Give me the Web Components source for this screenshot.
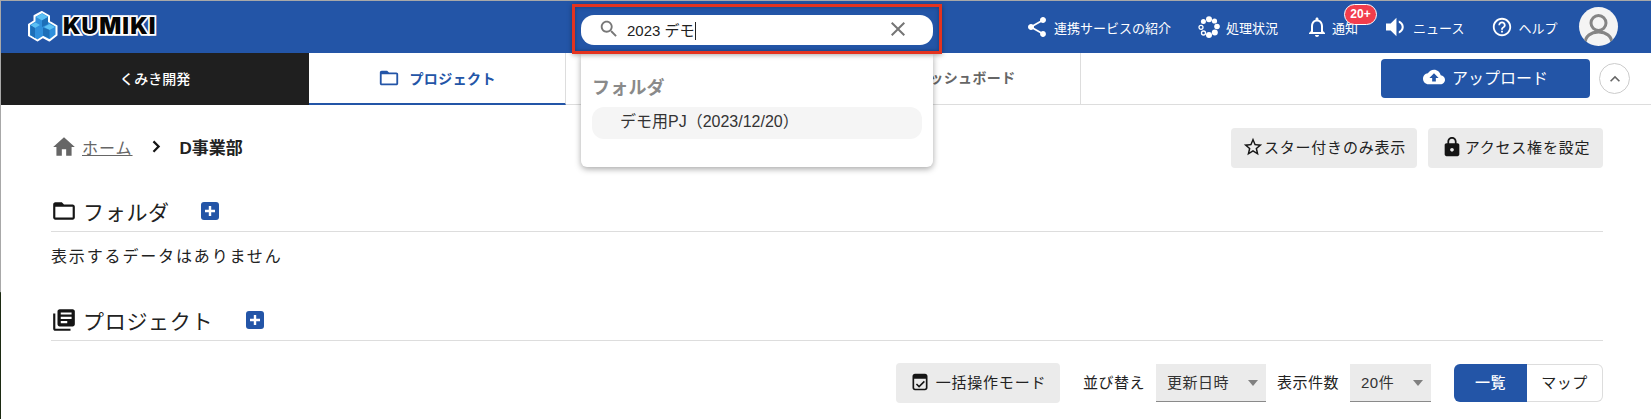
<!DOCTYPE html>
<html lang="ja">
<head>
<meta charset="utf-8">
<title>KUMIKI</title>
<style>
    html, body {
        margin: 0;
        height: 419px;
        overflow: hidden;
        background: #fff;
        font-family: "Liberation Sans", "Noto Sans CJK JP", sans-serif;
        color: #222;
    }
    #page {
        height: 418px;
        border-top: 1px solid #b5b5b5;
        border-left: 1px solid;
        border-image: linear-gradient(to bottom, #a8a8a8 0, #a8a8a8 291px, #1c2a12 292px, #1c2a12 100%) 1;
        overflow: hidden;
    }
</style>
</head>
<body>
<div id="page">
    <app-header></app-header>
    <app-tabs></app-tabs>
    <main-view></main-view>
</div>

<script>
const BLUE = "#2355a7";

const ICONS = {
    share: "M18 16.08c-.76 0-1.44.3-1.96.77L8.91 12.7c.05-.23.09-.46.09-.7s-.04-.47-.09-.7l7.05-4.11c.54.5 1.25.81 2.04.81 1.66 0 3-1.34 3-3s-1.34-3-3-3-3 1.34-3 3c0 .24.04.47.09.7L8.04 9.81C7.5 9.31 6.79 9 6 9c-1.66 0-3 1.34-3 3s1.34 3 3 3c.79 0 1.5-.31 2.04-.81l7.12 4.16c-.05.21-.08.43-.08.65 0 1.61 1.31 2.92 2.92 2.92 1.61 0 2.92-1.31 2.92-2.92s-1.31-2.92-2.92-2.92z",
    search: "M15.5 14h-.79l-.28-.27C15.41 12.59 16 11.11 16 9.5 16 5.91 13.09 3 9.5 3S3 5.91 3 9.5 5.91 16 9.5 16c1.61 0 3.09-.59 4.23-1.57l.27.28v.79l5 4.99L20.49 19l-4.99-5zm-6 0C7.01 14 5 11.99 5 9.5S7.01 5 9.5 5 14 7.01 14 9.5 11.99 14 9.5 14z",
    close: "M19 6.41 17.59 5 12 10.59 6.41 5 5 6.41 10.59 12 5 17.59 6.41 19 12 13.41 17.59 19 19 17.59 13.41 12z",
    bell: "M12 22c1.1 0 2-.9 2-2h-4c0 1.1.9 2 2 2zm6-6v-5c0-3.07-1.63-5.64-4.5-6.32V4c0-.83-.67-1.5-1.5-1.5s-1.5.67-1.5 1.5v.68C7.64 5.36 6 7.92 6 11v5l-2 2v1h16v-1l-2-2zm-2 1H8v-6c0-2.48 1.51-4.5 4-4.5s4 2.02 4 4.5v6z",
    volume: "M3 9v6h4l5 5V4L7 9H3zm11-2.500v1.800c1.500.7 2.500 2.100 2.500 3.700s-1 3-2.500 3.700v1.800c2.500-.8 4.300-2.900 4.300-5.500S16.500 7.300 14 6.500z",
    help: "M11 18h2v-2h-2v2zm1-16C6.48 2 2 6.48 2 12s4.48 10 10 10 10-4.48 10-10S17.52 2 12 2zm0 18c-4.41 0-8-3.59-8-8s3.59-8 8-8 8 3.59 8 8-3.59 8-8 8zm0-14c-2.21 0-4 1.79-4 4h2c0-1.1.9-2 2-2s2 .9 2 2c0 2-3 1.75-3 5h2c0-2.25 3-2.5 3-5 0-2.21-1.79-4-4-4z",
    folder: "M20 6h-8l-2-2H4c-1.1 0-1.99.9-1.99 2L2 18c0 1.1.9 2 2 2h16c1.1 0 2-.9 2-2V8c0-1.1-.9-2-2-2zm0 12H4V8h16v10z",
    home: "M10 20v-6h4v6h5v-8h3L12 3 2 12h3v8z",
    chevron: "M7.500 5 10 2.500 19.500 12 10 21.500 7.500 19l7-7z",
    less: "M12 8l-6 6 1.41 1.41L12 10.83l4.59 4.58L18 14z",
    upload: "M19.35 10.04C18.67 6.59 15.64 4 12 4 9.11 4 6.6 5.64 5.35 8.04 2.34 8.36 0 10.91 0 14c0 3.31 2.69 6 6 6h13c2.76 0 5-2.24 5-5 0-2.64-2.05-4.78-4.65-4.96zM14 13v4h-4v-4H7l5-5 5 5h-3z",
    star: "M22 9.24l-7.19-.62L12 2 9.19 8.63 2 9.24l5.46 4.73L5.82 21 12 17.27 18.18 21l-1.63-7.03L22 9.24zM12 15.4l-3.76 2.27 1-4.28-3.32-2.88 4.38-.38L12 6.1l1.71 4.04 4.38.38-3.32 2.88 1 4.28L12 15.4z",
    lock: "M18 8h-1V6c0-2.76-2.24-5-5-5S7 3.24 7 6v2H6c-1.1 0-2 .9-2 2v10c0 1.1.9 2 2 2h12c1.1 0 2-.9 2-2V10c0-1.1-.9-2-2-2zm-6 9c-1.1 0-2-.9-2-2s.9-2 2-2 2 .9 2 2-.9 2-2 2zm3.1-9H8.9V6c0-1.71 1.39-3.1 3.1-3.1 1.71 0 3.1 1.39 3.1 3.1v2z",
    books: "M4 6H2v14c0 1.1.9 2 2 2h14v-2H4V6zm16-4H8c-1.1 0-2 .9-2 2v12c0 1.1.9 2 2 2h12c1.1 0 2-.9 2-2V4c0-1.1-.9-2-2-2zm-1 9H9V9h10v2zm-4 4H9v-2h6v2zm4-8H9V5h10v2z",
    bulk: "M6 2h12c1.7 0 3 1.3 3 3v14c0 1.7-1.3 3-3 3H6c-1.7 0-3-1.3-3-3V5c0-1.7 1.3-3 3-3zm-1 6v11c0 .6.4 1 1 1h12c.6 0 1-.4 1-1V8H5zm11.6 2.6 1.3 1.3-7 7-3.8-3.8 1.3-1.3 2.5 2.5z",
};

// svg icon
class UiIcon extends HTMLElement {
    connectedCallback() {
        const size = this.getAttribute("size") || 24;
        const color = this.getAttribute("color") || "currentColor";
        const d = ICONS[this.getAttribute("name")];
        this.attachShadow({ mode: "open" }).innerHTML = `
            <style>
                :host { display: inline-flex; flex: none; }
                svg { display: block; }
            </style>
            <svg width="${size}" height="${size}" viewBox="0 0 24 24"><path fill="${color}" d="${d}"/></svg>
        `;
    }
}

// logo
class AppLogo extends HTMLElement {
    constructor() {
        super();
        this.attachShadow({ mode: "open" }).innerHTML = `
            <style>
                :host { display: flex; align-items: center; gap: 5px; }
                span {
                    font: 900 23px/1 Inter, "Liberation Sans", sans-serif;
                    letter-spacing: 1.1px;
                    color: #050505;
                    -webkit-text-stroke: 3.5px #fff;
                    paint-order: stroke fill;
                    margin-top: 1px;
                }
                svg { display: block; }
            </style>
            <svg width="31" height="31" viewBox="0 0 31 31">
                <path d="M15 1 22 5 22 10.5 29.5 15 29.5 24 22.5 29.5 16 26 10.5 29.5 2 24.5 2 13.5 7.5 10 7.5 5z" fill="#2f8fdc" stroke="#fff" stroke-width="2" stroke-linejoin="round"/>
                <path d="M15 2.5 21 6 15 9.5 9 6z M8.500 11.500 13 14 8 17 3.500 14.300z M22.500 13 28 16 22.500 19 17 16z" fill="#5cc0f4"/>
                <path d="M15 9.500 21 6V13L15 16z M3.500 14.300 8 17V27L3.500 24z M16 16.500 22.500 19V27.500L16 24.500z" fill="#1d6fb8"/>
            </svg>
            <span>KUMIKI</span>
        `;
    }
}

// ヘッダーの検索ボックス
class SearchBox extends HTMLElement {
    constructor() {
        super();
        this.attachShadow({ mode: "open" }).innerHTML = `
            <style>
                :host { display: block; position: relative; width: 352px; height: 30px; }
                .field {
                    display: flex;
                    align-items: center;
                    height: 100%;
                    box-sizing: border-box;
                    padding: 0 23px 2px 17px;
                    background: #fff;
                    border-radius: 13px;
                    font-size: 15px;
                    color: #222;
                }
                .value { margin-left: 7px; flex: 1; }
                .caret { display: inline-block; width: 1px; height: 18px; background: #222; vertical-align: -4px; }
                .mark {
                    position: absolute;
                    left: -9px; right: -9px; top: -11px; bottom: -9px;
                    border: 3px solid #e4331f;
                    box-shadow: 0 1px 5px rgba(0, 0, 0, .35), inset 0 0 4px rgba(0, 0, 0, .3);
                    pointer-events: none;
                }
                .drop {
                    position: absolute;
                    left: 0; right: 0; top: 39px;
                    height: 113px;
                    box-sizing: border-box;
                    padding: 21px 11px 0;
                    background: #fff;
                    border-radius: 0 0 6px 6px;
                    box-shadow: 0 2px 6px rgba(0, 0, 0, .35);
                }
                .head { font-size: 18px; font-weight: 700; color: #8a8a8a; line-height: 26px; letter-spacing: .2px; }
                .item {
                    margin-top: 6px;
                    height: 32px;
                    line-height: 29px;
                    padding-left: 28px;
                    background: #f5f5f5;
                    border-radius: 12px;
                    font-size: 16px;
                    color: #333;
                }
            </style>
            <div class="drop">
                <div class="head">フォルダ</div>
                <div class="item">デモ用PJ（2023/12/20）</div>
            </div>
            <div class="field">
                <ui-icon name="search" size="22" color="#777"></ui-icon>
                <span class="value">2023 デモ<span class="caret"></span></span>
                <ui-icon name="close" size="24" color="#757575"></ui-icon>
            </div>
            <div class="mark"></div>
        `;
    }
}

// ヘッダー右のメニュー項目
class NavItem extends HTMLElement {
    constructor() {
        super();
        this.attachShadow({ mode: "open" }).innerHTML = `
            <style>
                :host {
                    display: inline-flex;
                    align-items: center;
                    gap: var(--gap, 5px);
                    position: relative;
                    font-size: 13px;
                    color: #fff;
                }
            </style>
            <slot name="icon"></slot>
            <slot></slot>
        `;
    }
}

class AppHeader extends HTMLElement {
    constructor() {
        super();
        this.attachShadow({ mode: "open" }).innerHTML = `
            <style>
                :host {
                    display: flex;
                    align-items: center;
                    height: 52px;
                    background: ${BLUE};
                    position: relative;
                    z-index: 5;
                }
                app-logo { width: 554px; padding-left: 26px; margin-top: -2px; }
                search-box { margin-top: 6px; }
                nav { display: flex; align-items: center; margin-left: 92px; }
                .badge {
                    position: absolute;
                    left: 12px; top: -14px;
                    width: 31px; height: 19px;
                    border: 1.5px solid #fff;
                    border-radius: 11px;
                    background: #f23d4c;
                    font: 700 12px/19px "Liberation Sans", sans-serif;
                    text-align: center;
                    color: #fff;
                }
                .txt { position: relative; }
                .avatar {
                    display: block;
                    width: 39px; height: 39px;
                    margin-left: 22px;
                    margin-top: -2px;
                    border-radius: 50%;
                    overflow: hidden;
                    background: #f4f4f4;
                }
            </style>
            <app-logo></app-logo>
            <search-box></search-box>
            <nav>
                <nav-item><ui-icon slot="icon" name="share" color="#fff"></ui-icon>連携サービスの紹介</nav-item>
                <nav-item style="margin-left:27px;--gap:6px">
                    <svg slot="icon" width="22" height="22" viewBox="0 0 22 22" fill="#fff">
                        <circle cx="11" cy="3.200" r="3"/><circle cx="16.500" cy="5" r="2.600"/><circle cx="19" cy="10.500" r="2.800"/>
                        <circle cx="16.800" cy="16.500" r="3"/><circle cx="11" cy="19" r="3"/>
                        <circle cx="5.500" cy="17" r="2" fill="none" stroke="#fff" stroke-width="1.300"/><circle cx="3" cy="11.300" r="2" fill="none" stroke="#fff" stroke-width="1.300"/><circle cx="5.400" cy="5.500" r="2.500"/>
                    </svg>
                    処理状況
                </nav-item>
                <nav-item style="margin-left:27px;--gap:3px"><ui-icon slot="icon" name="bell" color="#fff"></ui-icon><span class="txt">通知<span class="badge">20+</span></span></nav-item>
                <nav-item style="margin-left:28px;--gap:9px">
                    <svg slot="icon" width="18" height="22" viewBox="3 3 15.500 18"><path fill="#fff" d="${ICONS.volume}"/></svg>
                    ニュース
                </nav-item>
                <nav-item style="margin-left:27px"><ui-icon slot="icon" name="help" size="22" color="#fff"></ui-icon>ヘルプ</nav-item>
                <svg class="avatar" viewBox="0 0 39 39">
                    <circle cx="19.500" cy="16" r="7.500" fill="none" stroke="#858585" stroke-width="3"/>
                    <path d="M6 37c0-8 6-12 13.500-12S33 29 33 37" fill="none" stroke="#858585" stroke-width="3"/>
                </svg>
            </nav>
        `;
    }
}

// タブ
class AppTabs extends HTMLElement {
    constructor() {
        super();
        this.attachShadow({ mode: "open" }).innerHTML = `
            <style>
                :host {
                    display: flex;
                    align-items: stretch;
                    height: 52px;
                    box-sizing: border-box;
                    border-bottom: 1px solid #ddd;
                    background: #fff;
                }
                .tab {
                    display: flex;
                    align-items: center;
                    justify-content: center;
                    gap: 9px;
                    box-sizing: border-box;
                    width: 257.300px;
                    padding-bottom: 3px;
                    border-right: 1px solid #ddd;
                    font-size: 14px;
                    font-weight: 700;
                    letter-spacing: .4px;
                    color: #666;
                }
                .team {
                    width: 308px;
                    height: 52px;
                    background: #1f1f1f;
                    color: #fff;
                    font-weight: 500;
                    border: 0;
                    letter-spacing: 0;
                }
                .on {
                    color: ${BLUE};
                    height: 52px;
                    border-bottom: 2px solid ${BLUE};
                    padding-bottom: 1px;
                }
                .end { flex: 1; display: flex; align-items: center; justify-content: flex-end; padding-right: 21px; gap: 9px; }
                .up {
                    display: flex;
                    align-items: center;
                    justify-content: center;
                    gap: 7px;
                    box-sizing: border-box;
                    width: 209px;
                    height: 39px;
                    padding-bottom: 3px;
                    border-radius: 4px;
                    background: ${BLUE};
                    color: #fff;
                    font-size: 16px;
                }
                .fold {
                    display: flex;
                    align-items: center;
                    justify-content: center;
                    box-sizing: border-box;
                    width: 31px;
                    height: 31px;
                    border: 1px solid #ccc;
                    border-radius: 50%;
                }
            </style>
            <div class="tab team">くみき開発</div>
            <div class="tab on"><ui-icon name="folder" color="${BLUE}" size="22"></ui-icon>プロジェクト</div>
            <div class="tab"></div>
            <div class="tab"><ui-icon name="home" color="#666" size="18"></ui-icon>ダッシュボード</div>
            <div class="end">
                <div class="up"><ui-icon name="upload" size="22" color="#fff"></ui-icon>アップロード</div>
                <div class="fold"><ui-icon name="less" size="20" color="#666"></ui-icon></div>
            </div>
        `;
    }
}

// グレーのボタン
class GrayButton extends HTMLElement {
    constructor() {
        super();
        this.attachShadow({ mode: "open" }).innerHTML = `
            <style>
                :host {
                    display: inline-flex;
                    align-items: center;
                    justify-content: center;
                    box-sizing: border-box;
                    height: 40px;
                    padding-bottom: 3px;
                    border-radius: 4px;
                    background: #ebebeb;
                    font-size: 15px;
                    letter-spacing: .8px;
                    color: #222;
                }
            </style>
            <slot></slot>
        `;
    }
}

// 見出し
class SectionHead extends HTMLElement {
    constructor() {
        super();
        const icon = this.getAttribute("icon");
        this.attachShadow({ mode: "open" }).innerHTML = `
            <style>
                :host {
                    display: flex;
                    align-items: center;
                    height: 40px;
                    border-bottom: 1px solid #ddd;
                    font-size: 21px;
                    letter-spacing: .7px;
                    color: #222;
                }
                ui-icon { margin-right: 6px; }
                .add {
                    display: flex;
                    align-items: center;
                    justify-content: center;
                    width: 18px;
                    height: 18px;
                    margin-left: var(--add, 31px);
                    border-radius: 3px;
                    background: ${BLUE};
                }
            </style>
            <ui-icon name="${icon}" size="26" color="#151515"></ui-icon>
            <slot></slot>
            <div class="add"><svg width="12" height="12" viewBox="0 0 12 12"><path d="M6 1v10M1 6h10" stroke="#fff" stroke-width="2.400"/></svg></div>
        `;
    }
}

// セレクト
class UiSelect extends HTMLElement {
    constructor() {
        super();
        this.attachShadow({ mode: "open" }).innerHTML = `
            <style>
                :host {
                    display: flex;
                    align-items: center;
                    justify-content: space-between;
                    box-sizing: border-box;
                    height: 38px;
                    padding: 0 8px 3px 11px;
                    border-bottom: 1px solid #8a8a8a;
                    background: #ebebeb;
                    font-size: 15px;
                    color: #333;
                }
                i { width: 0; height: 0; margin-top: 3px; border: 5px solid transparent; border-top: 6px solid #808080; border-bottom: 0; }
            </style>
            <slot></slot><i></i>
        `;
    }
}

// 一覧・マップ切り替え
class ViewToggle extends HTMLElement {
    constructor() {
        super();
        this.attachShadow({ mode: "open" }).innerHTML = `
            <style>
                :host { display: flex; width: 149px; height: 38px; font-size: 15px; letter-spacing: .5px; }
                div { display: flex; align-items: center; justify-content: center; box-sizing: border-box; padding-bottom: 3px; }
                .a { width: 73px; background: ${BLUE}; color: #fff; font-weight: 500; border-radius: 6px 0 0 6px; }
                .b { flex: 1; border: 1px solid #ddd; border-left: 0; border-radius: 0 6px 6px 0; color: #222; }
            </style>
            <div class="a">一覧</div>
            <div class="b">マップ</div>
        `;
    }
}

// 本文
class MainView extends HTMLElement {
    constructor() {
        super();
        this.attachShadow({ mode: "open" }).innerHTML = `
            <style>
                :host {
                    display: flex;
                    flex-direction: column;
                    padding: 23px 48px 0 50px;
                }
                .crumb { display: flex; align-items: center; height: 40px; }
                .path { display: flex; align-items: center; padding-bottom: 3px; font-size: 16px; }
                .path a { margin-left: 5px; color: #666; text-decoration: underline; letter-spacing: 1px; }
                .path b { color: #222; margin-left: 17px; font-size: 17px; }
                .path .sep { margin-left: 15px; }
                .actions { margin-left: auto; display: flex; gap: 11px; }
                .star { width: 186px; }
                .lock { width: 175px; gap: 2px; }
                .none { height: 24px; margin-top: 13px; font-size: 16px; line-height: 24px; letter-spacing: 1.85px; color: #222; }
                .first { margin-top: 23px; }
                .second { margin-top: 31px; --add: 33px; }
                .bar { display: flex; align-items: center; justify-content: flex-end; margin-top: 22px; font-size: 15px; letter-spacing: .5px; color: #222; }
                .bulk { width: 164px; gap: 6px; }
                .lab { margin: 0 11px; padding-bottom: 3px; }
                .s1 { width: 110px; letter-spacing: .5px; }
                .s2 { width: 81px; }
                view-toggle { margin-left: 23px; }
            </style>
            <div class="crumb">
                <div class="path">
                    <ui-icon name="home" color="#666" size="26"></ui-icon>
                    <a>ホーム</a>
                    <ui-icon class="sep" name="chevron" size="15" color="#151515"></ui-icon>
                    <b>D事業部</b>
                </div>
                <div class="actions">
                    <gray-button class="star"><ui-icon name="star" size="22" color="#151515"></ui-icon>スター付きのみ表示</gray-button>
                    <gray-button class="lock"><ui-icon name="lock" size="22" color="#151515"></ui-icon>アクセス権を設定</gray-button>
                </div>
            </div>
            <section-head class="first" icon="folder">フォルダ</section-head>
            <div class="none">表示するデータはありません</div>
            <section-head class="second" icon="books">プロジェクト</section-head>
            <div class="bar">
                <gray-button class="bulk"><ui-icon name="bulk" size="20" color="#151515"></ui-icon>一括操作モード</gray-button>
                <span class="lab" style="margin-left:23px">並び替え</span>
                <ui-select class="s1">更新日時</ui-select>
                <span class="lab">表示件数</span>
                <ui-select class="s2">20件</ui-select>
                <view-toggle></view-toggle>
            </div>
        `;
    }
}

customElements.define("ui-icon", UiIcon);
customElements.define("app-logo", AppLogo);
customElements.define("search-box", SearchBox);
customElements.define("nav-item", NavItem);
customElements.define("app-header", AppHeader);
customElements.define("app-tabs", AppTabs);
customElements.define("gray-button", GrayButton);
customElements.define("section-head", SectionHead);
customElements.define("ui-select", UiSelect);
customElements.define("view-toggle", ViewToggle);
customElements.define("main-view", MainView);
</script>
</body>
</html>
